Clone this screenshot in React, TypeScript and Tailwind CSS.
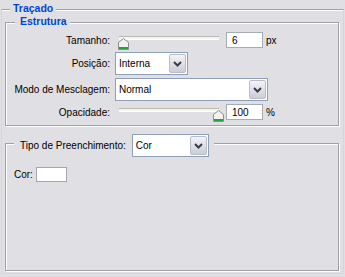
import React from "react";

const etched =
  "border border-[#a0a0a5] shadow-[inset_1px_1px_0_#ffffff,1px_1px_0_#ffffff]";

function Chevron() {
  return (
    <svg width="9" height="6" viewBox="0 0 9 6">
      <path d="M1 1 L4.5 4.5 L8 1" fill="none" stroke="#3c3c48" strokeWidth="2" />
    </svg>
  );
}

function Select({ value, w }: { value: string; w: string }) {
  return (
    <div
      className={`flex h-[23px] ${w} items-stretch border border-[#8e9fb8] bg-white p-px`}
    >
      <div className="flex flex-1 items-center pl-[2px] text-[10px]">{value}</div>
      <div className="flex w-[17px] items-center justify-center rounded-[2px] border border-[#b9bccb] bg-gradient-to-b from-[#f3f3f7] to-[#ccccd8]">
        <Chevron />
      </div>
    </div>
  );
}

function Thumb() {
  return (
    <svg width="11" height="12" viewBox="0 0 11 12">
      <path
        d="M0.5 4.5 L5.5 0.5 L10.5 4.5 V11.5 H0.5 Z"
        fill="#f2f2ee"
        stroke="#8d8d94"
      />
      <rect x="1" y="9" width="9" height="2" fill="#21a33a" />
    </svg>
  );
}

function Slider({ pos }: { pos: string }) {
  return (
    <div className="relative h-[16px] w-[108px]">
      <div className="ml-[4px] mt-[8px] h-[3px] w-[100px] border-t border-[#b8b8b4] bg-[#f6f6ef] shadow-[0_1px_0_#ffffff]" />
      <div className={`absolute top-[2px] ${pos}`}>
        <Thumb />
      </div>
    </div>
  );
}

function NumBox({ value }: { value: string }) {
  return (
    <div className="flex h-[16px] w-[37px] items-center border border-[#a5acb2] bg-white pl-[5px] text-[10px]">
      {value}
    </div>
  );
}

export default function App() {
  return (
    <div
      className="h-[277px] w-[345px] overflow-hidden bg-[#e0dfe3] pt-[9px] text-black"
      style={{ fontFamily: '"Liberation Sans", Arial, sans-serif' }}
    >
      <div className="relative ml-px h-[265px] w-[343px] border-t border-[#a0a0a5] shadow-[inset_0_1px_0_#ffffff] border-x border-b border-x-[#d6d5da] border-b-[#d6d5da]">
        <div className="absolute -top-[8px] left-[8px] bg-[#e0dfe3] px-[3px] text-[10.5px] font-bold leading-[13px] text-[#0046d5]">
          Traçado
        </div>

        {/* Estrutura */}
        <div className={`relative ml-[3px] mt-[12px] w-[334px] pt-[9px] pb-[5px] ${etched}`}>
          <div className="absolute -top-[8px] left-[9px] bg-[#e0dfe3] pl-[5px] pr-[3px] text-[10.5px] font-bold leading-[13px] text-[#0046d5]">
            Estrutura
          </div>

          <div className="flex h-[16px] items-center text-[10px]">
            <div className="w-[104px] text-right">Tamanho:</div>
            <div className="ml-[5px]">
              <Slider pos="left-[3px]" />
            </div>
            <div className="ml-[3px]">
              <NumBox value="6" />
            </div>
            <div className="ml-[3px]">px</div>
          </div>

          <div className="mt-[4px] flex h-[23px] items-center text-[10px]">
            <div className="w-[104px] text-right">Posição:</div>
            <div className="ml-[5px]">
              <Select value="Interna" w="w-[73px]" />
            </div>
          </div>

          <div className="mt-[3px] flex h-[23px] items-center text-[10px]">
            <div className="w-[104px] text-right">Modo de Mesclagem:</div>
            <div className="ml-[5px]">
              <Select value="Normal" w="w-[153px]" />
            </div>
          </div>

          <div className="mt-[3px] flex h-[16px] items-center text-[10px]">
            <div className="w-[104px] text-right">Opacidade:</div>
            <div className="ml-[5px]">
              <Slider pos="left-[98px]" />
            </div>
            <div className="ml-[3px]">
              <NumBox value="100" />
            </div>
            <div className="ml-[3px]">%</div>
          </div>
        </div>

        {/* Preenchimento */}
        <div className={`relative ml-[3px] mt-[17px] h-[128px] w-[334px] pt-[23px] ${etched}`}>
          <div className="absolute -top-[10px] left-[8px] flex items-center bg-[#e0dfe3] pl-[6px] pr-[5px] text-[10px]">
            <div>Tipo de Preenchimento:</div>
            <div className="ml-[6px]">
              <Select value="Cor" w="w-[77px]" />
            </div>
          </div>

          <div className="flex h-[15px] items-center pl-[8px] text-[10px]">
            <div>Cor:</div>
            <div className="ml-[3px] h-[15px] w-[31px] border border-[#a5a5aa] bg-white" />
          </div>
        </div>
      </div>
    </div>
  );
}
